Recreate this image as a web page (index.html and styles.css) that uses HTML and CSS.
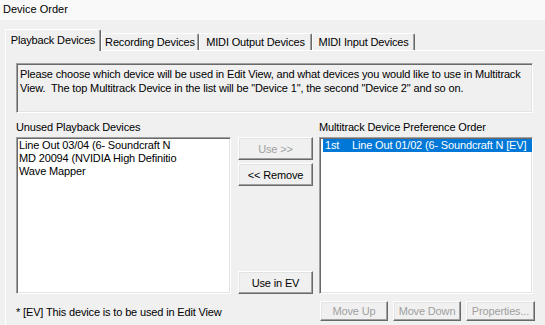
FILE: index.html
```html
<!DOCTYPE html>
<html lang="en">
<head>
    <meta charset="UTF-8">
    <meta name="viewport" content="width=device-width, initial-scale=1.0">
    <title>Device Order</title>
    <link rel="stylesheet" href="styles.css">
</head>
<body>
    <div class="caption">Device Order</div>

    <div class="tabs">
        <div class="tab tab-playback active">Playback Devices</div>
        <div class="tab tab-recording">Recording Devices</div>
        <div class="tab tab-midi-out">MIDI Output Devices</div>
        <div class="tab tab-midi-in">MIDI Input Devices</div>
    </div>

    <div class="page">
        <div class="info">
            Please choose which device will be used in Edit View, and what devices you would like to use in Multitrack
            View.&nbsp; The top Multitrack Device in the list will be "Device 1", the second "Device 2" and so on.
        </div>

        <div class="lists">
            <div class="label">Unused Playback Devices</div>
            <div></div>
            <div class="label">Multitrack Device Preference Order</div>

            <div class="listbox">
                <div class="item">Line Out 03/04 (6- Soundcraft N</div>
                <div class="item">MD 20094 (NVIDIA High Definitio</div>
                <div class="item">Wave Mapper</div>
            </div>

            <div class="move-buttons">
                <button class="btn" disabled>Use &gt;&gt;</button>
                <button class="btn">&lt;&lt; Remove</button>
                <button class="btn use-ev">Use in EV</button>
            </div>

            <div class="listbox listbox-order">
                <div class="item selected"><span class="rank">1st</span>Line Out 01/02 (6- Soundcraft N [EV]</div>
            </div>
        </div>

        <div class="footer">
            <div class="footnote">* [EV] This device is to be used in Edit View</div>
            <button class="btn btn-small btn-up" disabled>Move Up</button>
            <button class="btn btn-small btn-down" disabled>Move Down</button>
            <button class="btn btn-small btn-props" disabled>Properties...</button>
        </div>
    </div>
</body>
</html>
```

FILE: styles.css
```css
html, body {
    margin: 0;
    overflow: hidden;
}
body {
    width: 545px;
    height: 325px;
    background-color: #f0f0f0;
    font-family: "Liberation Sans", Arial, sans-serif;
    font-size: 11px;
    letter-spacing: -0.15px;
    color: #000;
}
.caption {
    height: 20px;
    padding-left: 3px;
    line-height: 19px;
    background-color: #f9f9f9;
    letter-spacing: 0;
}

/* tab strip */
.tabs {
    display: flex;
    align-items: flex-end;
    height: 21px;
    padding: 9px 0 0 5px;
}
.tab {
    box-sizing: border-box;
    height: 17px;
    border: 1px solid;
    border-color: #fff #696969 transparent #fff;
    border-bottom: none;
    border-radius: 2px 2px 0 0;
    box-shadow: inset -1px 0 #a0a0a0;
    line-height: 16px;
    text-align: center;
    white-space: nowrap;
}
.tab.active {
    position: relative;
    z-index: 1;
    height: 22px;
    margin-bottom: -1px;
    line-height: 20px;
    background-color: #f0f0f0;
}
.tab-playback { width: 96px; }
.tab-recording { width: 98px; }
.tab-midi-out { width: 113px; }
.tab-midi-in { width: 103px; }

/* tab page */
.page {
    width: 529px;
    height: 262px;
    margin-left: 5px;
    padding: 12px 0 0 10px;
    border-top: 1px solid #fff;
    border-left: 1px solid #fff;
}
.info {
    box-sizing: border-box;
    width: 517px;
    height: 50px;
    padding: 3px 3px 0;
    border: 1px solid;
    border-color: #a0a0a0 #fff #fff #a0a0a0;
    box-shadow: inset 1px 1px #696969, inset -1px -1px #e3e3e3;
    line-height: 14px;
}
.lists {
    display: grid;
    width: 517px;
    grid-template-columns: 215px 76px 214px;
    grid-template-rows: 16px 157px;
    column-gap: 6px;
    margin-top: 8px;
}
.label {
    line-height: 13px;
    white-space: nowrap;
}
.listbox {
    box-sizing: border-box;
    padding: 1px 0 0 2px;
    border: 1px solid;
    border-color: #a0a0a0 #fff #fff #a0a0a0;
    box-shadow: inset 1px 1px #696969, inset -1px -1px #e3e3e3;
    background-color: #fff;
    line-height: 13px;
    white-space: nowrap;
    overflow: hidden;
}
.item.selected {
    margin-left: 1px;
    padding-left: 2px;
    background-color: #0078d7;
    color: #fff;
}
.rank {
    display: inline-block;
    width: 27px;
}

/* buttons */
.move-buttons {
    display: flex;
    flex-direction: column;
    gap: 3px;
    width: 75px;
    justify-self: end;
}
.btn {
    box-sizing: border-box;
    width: 75px;
    height: 23px;
    padding: 0;
    border: 1px solid;
    border-color: #fff #696969 #696969 #fff;
    box-shadow: inset -1px -1px #a0a0a0, inset 1px 1px #e3e3e3;
    background-color: #f0f0f0;
    font: inherit;
    letter-spacing: inherit;
    color: #000;
    white-space: nowrap;
}
.btn:disabled {
    color: #a0a0a0;
}
.use-ev {
    margin-top: auto;
}
.footer {
    display: flex;
    align-items: center;
    gap: 5px;
    margin-top: 7px;
}
.footnote {
    flex: 0 0 299px;
    padding-top: 2px;
    white-space: nowrap;
}
.btn-small {
    width: 68px;
    height: 20px;
}
.btn-props {
    width: 69px;
    overflow: hidden;
}
```
